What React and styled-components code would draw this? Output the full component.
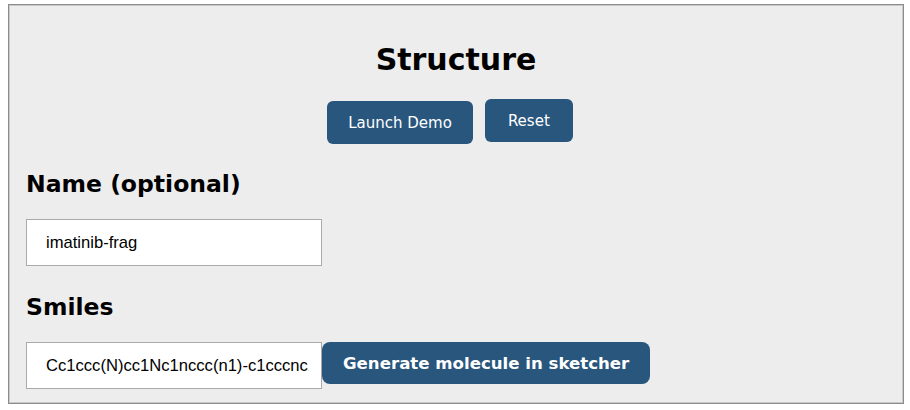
import React from "react";
import styled, { createGlobalStyle } from "styled-components";

const Global = createGlobalStyle`
  html, body { margin: 0; padding: 0; background: #fff; }
  body { padding: 4px 0 0 8px; font-family: "DejaVu Sans", Verdana, sans-serif; }
`;

const Panel = styled.div`
  width: 896px;
  height: 400px;
  box-sizing: border-box;
  border: 1px solid #8c8c8c;
  box-shadow: inset 0 0 0 1px #c9c9c9;
  background: #ededed;
  padding: 0 17px;
  overflow: hidden;
`;

const Title = styled.h1`
  margin: 0;
  padding-top: 37px;
  text-align: center;
  font-family: "DejaVu Sans", Verdana, sans-serif;
  font-weight: bold;
  font-size: 30px;
  line-height: 36px;
  color: #000;
`;

const ButtonRow = styled.div`
  display: flex;
  justify-content: center;
  align-items: flex-start;
  gap: 12px;
  margin-top: 21px;
  padding-right: 12px;
`;

const Button = styled.button`
  background: #28567d;
  color: #fff;
  border: none;
  border-radius: 6px;
  font-family: "DejaVu Sans", Verdana, sans-serif;
  font-size: 15px;
  padding: 0 ${(p) => p.$pad}px;
  height: 43px;
  margin-top: ${(p) => p.$offset || 0}px;
  cursor: pointer;
`;

const Heading = styled.h2`
  margin: ${(p) => p.$space}px 0 0 0;
  font-family: "DejaVu Sans", Verdana, sans-serif;
  font-weight: bold;
  font-size: 23.5px;
  line-height: 30px;
  color: #000;
`;

const Field = styled.div`
  display: flex;
  align-items: flex-start;
  margin-top: ${(p) => p.$gap}px;
`;

const Input = styled.input`
  width: 296px;
  height: 47px;
  box-sizing: border-box;
  border: 1px solid #aaa;
  background: #fff;
  padding: 0 12px 0 19px;
  font-family: "Liberation Sans", Arial, sans-serif;
  font-size: 16.6px;
  color: #000;
  outline: none;
`;

const GenerateButton = styled.button`
  background: #28567d;
  color: #fff;
  border: none;
  border-radius: 8px;
  font-family: "DejaVu Sans", Verdana, sans-serif;
  font-weight: bold;
  font-size: 16.6px;
  height: 42px;
  padding: 0 21px;
  cursor: pointer;
`;

export default function App() {
  return (
    <>
      <Global />
      <Panel>
        <Title>Structure</Title>
        <ButtonRow>
          <Button $pad={21} $offset={2}>Launch Demo</Button>
          <Button $pad={23}>Reset</Button>
        </ButtonRow>
        <Heading $space={25}>Name (optional)</Heading>
        <Field $gap={20}>
          <Input defaultValue="imatinib-frag" />
        </Field>
        <Heading $space={26}>Smiles</Heading>
        <Field $gap={20}>
          <Input defaultValue="Cc1ccc(N)cc1Nc1nccc(n1)-c1cccnc1" />
          <GenerateButton>Generate molecule in sketcher</GenerateButton>
        </Field>
      </Panel>
    </>
  );
}
